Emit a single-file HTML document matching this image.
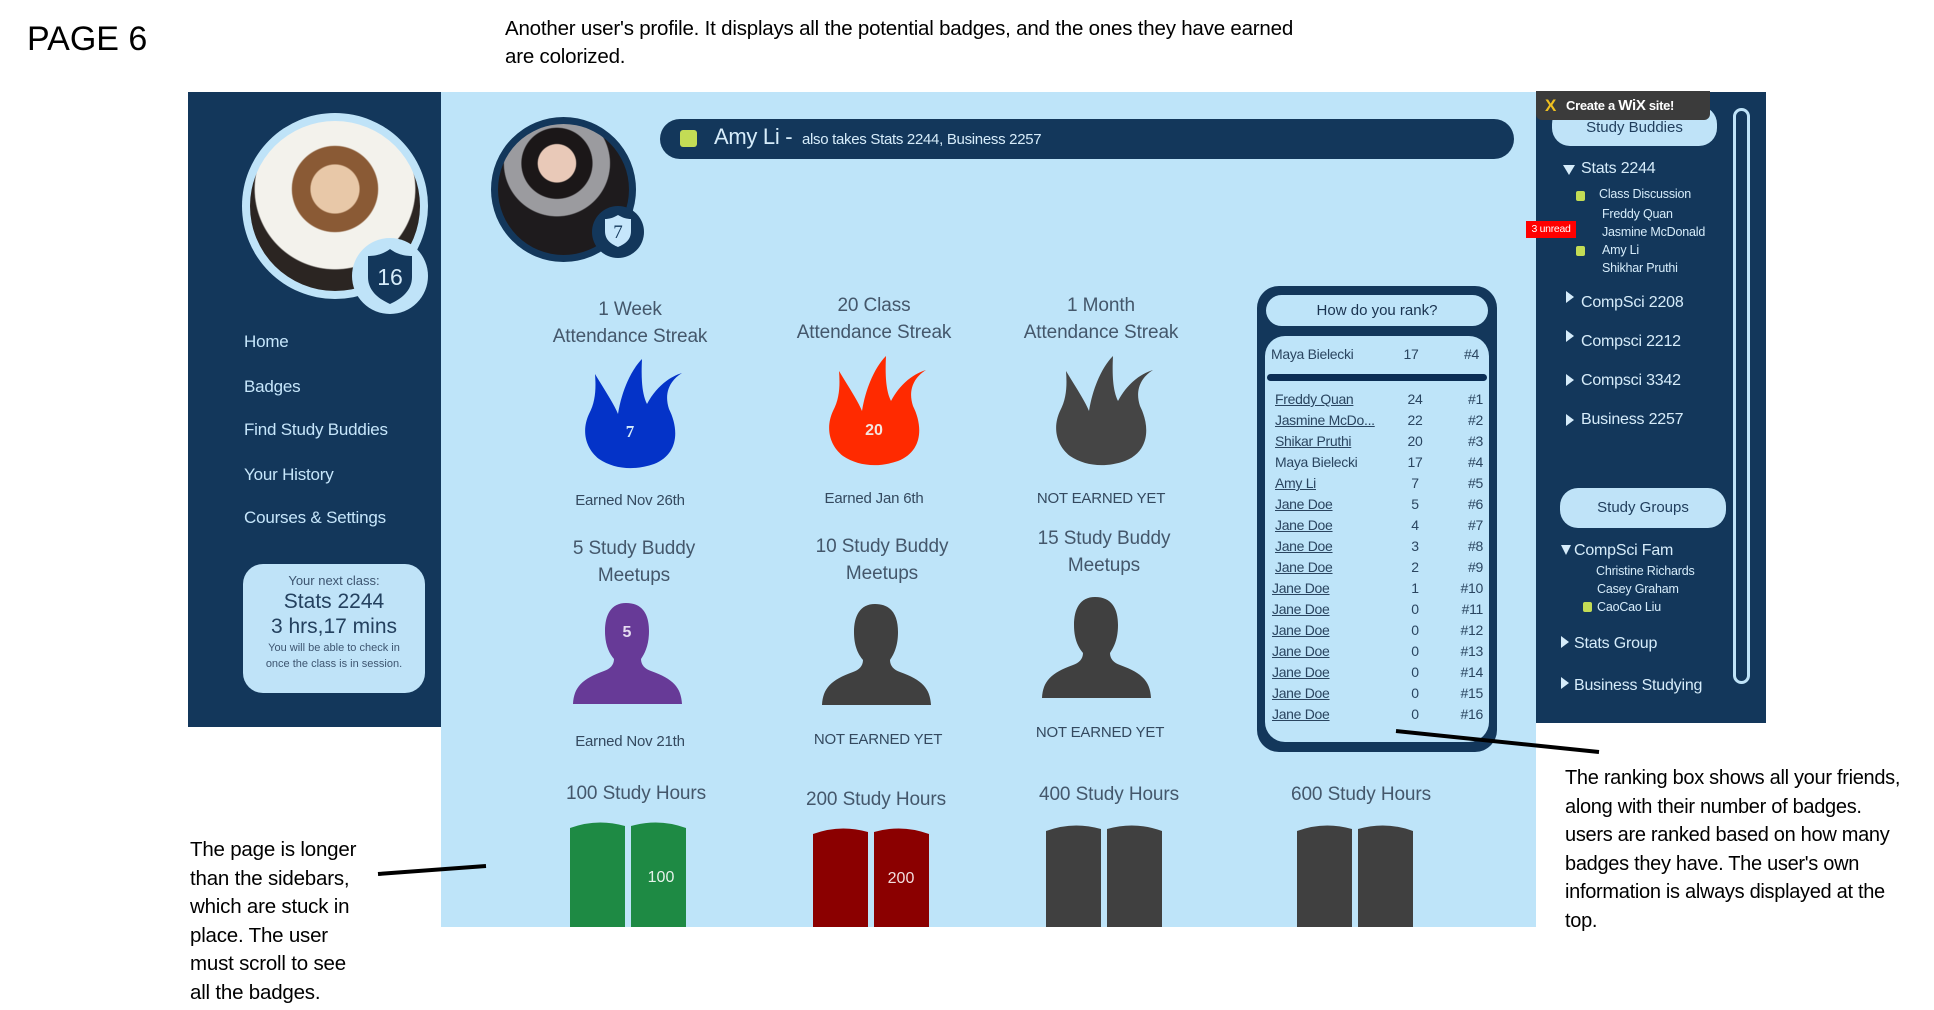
<!DOCTYPE html>
<html><head><meta charset="utf-8">
<style>
*{margin:0;padding:0;box-sizing:border-box}
body{width:1934px;height:1010px;background:#fff;position:relative;overflow:hidden;font-family:"Liberation Sans",sans-serif;color:#1a3a5c}
.a{position:absolute}
.cal{font-family:"Liberation Sans",sans-serif;color:#000}
.dk{background:#13375b}
.nav{color:#c6e6fb;font-size:17px;left:244px;letter-spacing:-.2px}
.t{position:absolute;text-align:center;color:#44576b;font-size:19px;line-height:27px;width:240px;letter-spacing:-.1px}
.e{position:absolute;text-align:center;color:#34495f;font-size:15px;width:240px;letter-spacing:-.2px}
.rk{position:absolute;font-size:14px;color:#2a4560;left:0;width:240px;height:21px;letter-spacing:-.3px}
.rk span{position:absolute}
.rk .n{left:10px;text-decoration:underline}
.rk .c{left:135px;width:30px;text-align:center}
.rk .r{right:22px}
.sb{color:#d6ecfa;position:absolute;font-size:16px;letter-spacing:-.2px}
.ss{color:#d6ecfa;position:absolute;font-size:12.5px;letter-spacing:-.2px}
.tri{position:absolute;width:0;height:0}
.gs{position:absolute;width:9px;height:10px;background:#c3dc55;border-radius:2px}
</style></head><body>

<div class="a cal" style="left:27px;top:20px;font-size:34px">PAGE 6</div>
<div class="a cal" style="left:505px;top:15px;font-size:20.5px;line-height:28px;letter-spacing:-.2px">Another user's profile. It displays all the potential badges, and the ones they have earned<br>are colorized.</div>

<!-- left sidebar -->
<div class="a dk" style="left:188px;top:92px;width:253px;height:635px"></div>
<div class="a" style="left:242px;top:113px;width:186px;height:186px;border-radius:50%;background:#bfe3f8"></div>
<div class="a" style="left:250px;top:121px;width:170px;height:170px;border-radius:50%;background:radial-gradient(circle at 50% 40%,#e8c8a8 0 18%,#8a5a35 19% 32%,#f3f2ec 33% 60%,#2b2522 61%)"></div>
<div class="a" style="left:352px;top:238px;width:76px;height:76px;border-radius:50%;background:#bfe3f8"></div>
<svg class="a" style="left:365px;top:247px" width="50" height="58" viewBox="0 0 50 58"><path d="M25 2 C33 8 41 9 47 9 L47 30 C47 44 36 52 25 57 C14 52 3 44 3 30 L3 9 C9 9 17 8 25 2Z" fill="#13375b"/><text x="25" y="38" text-anchor="middle" fill="#d6ecfa" font-size="23" font-family="Liberation Sans,sans-serif">16</text></svg>
<div class="a nav" style="top:332px">Home</div>
<div class="a nav" style="top:377px">Badges</div>
<div class="a nav" style="top:420px">Find Study Buddies</div>
<div class="a nav" style="top:465px">Your History</div>
<div class="a nav" style="top:508px">Courses &amp; Settings</div>
<div class="a" style="left:243px;top:564px;width:182px;height:129px;border-radius:20px;background:#bfe3f8;text-align:center;color:#24415f">
<div style="font-size:13px;margin-top:9px;color:#3d5570">Your next class:</div>
<div style="font-size:21px;margin-top:2px">Stats 2244</div>
<div style="font-size:21px;margin-top:1px">3 hrs,17 mins</div>
<div style="font-size:11px;line-height:16px;margin-top:1px;color:#3d5570">You will be able to check in<br>once the class is in session.</div>
</div>

<!-- main -->
<div class="a" style="left:441px;top:92px;width:1095px;height:835px;background:#bee4f9"></div>
<div class="a" style="left:491px;top:117px;width:145px;height:145px;border-radius:50%;background:#13375b"></div>
<div class="a" style="left:498px;top:124px;width:131px;height:131px;border-radius:50%;background:radial-gradient(circle at 45% 30%,#e9c9b8 0 16%,#1b1718 17% 30%,#9b9b9f 31% 45%,#1e1b1d 46%)"></div>
<div class="a" style="left:592px;top:206px;width:52px;height:52px;border-radius:50%;background:#13375b"></div>
<svg class="a" style="left:604px;top:214px" width="28" height="34" viewBox="0 0 28 34"><path d="M14 1 C19 4 23 5 27 5 L27 17 C27 26 21 30 14 33 C7 30 1 26 1 17 L1 5 C5 5 9 4 14 1Z" fill="#c6e6fb"/><text x="14" y="24" text-anchor="middle" fill="#13375b" font-size="19" font-family="Liberation Serif,serif">7</text></svg>
<div class="a dk" style="left:660px;top:119px;width:854px;height:40px;border-radius:20px"></div>
<div class="a" style="left:680px;top:130px;width:17px;height:17px;background:#c3dc55;border-radius:3px"></div>
<div class="a" style="left:714px;top:124px;color:#d6ecfa;font-size:22px;letter-spacing:-.3px">Amy Li - <span style="font-size:15px">&nbsp;also takes Stats 2244, Business 2257</span></div>

<!-- row 1 -->
<div class="t" style="left:510px;top:296px">1 Week<br>Attendance Streak</div>
<div class="t" style="left:754px;top:292px">20 Class<br>Attendance Streak</div>
<div class="t" style="left:981px;top:292px">1 Month<br>Attendance Streak</div>
<svg class="a" style="left:582px;top:358px" width="104" height="112" viewBox="-2 -1 104 112"><path d="M11 15 C20 30 30 45 34 55 C38 30 48 10 58 0 C57 20 58 35 63 45 C72 28 85 18 98 14 C85 22 80 35 85 50 C95 70 95 95 70 105 C50 112 30 110 15 100 C0 88 -2 70 5 55 C12 42 12 28 11 15Z" fill="#0433c8"/><text x="46" y="78" text-anchor="middle" fill="#d6ecfa" font-size="17" font-weight="bold" font-family="Liberation Serif,serif">7</text></svg>
<svg class="a" style="left:826px;top:355px" width="104" height="112" viewBox="-2 -1 104 112"><path d="M11 15 C20 30 30 45 34 55 C38 30 48 10 58 0 C57 20 58 35 63 45 C72 28 85 18 98 14 C85 22 80 35 85 50 C95 70 95 95 70 105 C50 112 30 110 15 100 C0 88 -2 70 5 55 C12 42 12 28 11 15Z" fill="#ff2a00"/><text x="46" y="79" text-anchor="middle" fill="#f4e6e0" font-size="16" font-weight="bold" font-family="Liberation Sans,sans-serif">20</text></svg>
<svg class="a" style="left:1053px;top:355px" width="104" height="112" viewBox="-2 -1 104 112"><path d="M11 15 C20 30 30 45 34 55 C38 30 48 10 58 0 C57 20 58 35 63 45 C72 28 85 18 98 14 C85 22 80 35 85 50 C95 70 95 95 70 105 C50 112 30 110 15 100 C0 88 -2 70 5 55 C12 42 12 28 11 15Z" fill="#454545"/></svg>
<div class="e" style="left:510px;top:492px">Earned Nov 26th</div>
<div class="e" style="left:754px;top:490px">Earned Jan 6th</div>
<div class="e" style="left:981px;top:490px">NOT EARNED YET</div>

<!-- row 2 -->
<div class="t" style="left:514px;top:535px">5 Study Buddy<br>Meetups</div>
<div class="t" style="left:762px;top:533px">10 Study Buddy<br>Meetups</div>
<div class="t" style="left:984px;top:525px">15 Study Buddy<br>Meetups</div>
<svg class="a" style="left:573px;top:603px" width="110" height="102" viewBox="0 0 110 102"><path d="M53 0 C70 0 76 12 76 28 C76 42 72 50 68 56 C68 62 72 66 78 68 C100 76 108 84 109 101 L0 101 C1 84 9 76 31 68 C37 66 41 62 41 56 C36 50 32 42 32 28 C32 12 38 0 53 0Z" fill="#673a97"/><text x="54" y="34" text-anchor="middle" fill="#e6dcf0" font-size="16" font-weight="bold" font-family="Liberation Sans,sans-serif">5</text></svg>
<svg class="a" style="left:822px;top:604px" width="110" height="102" viewBox="0 0 110 102"><path d="M53 0 C70 0 76 12 76 28 C76 42 72 50 68 56 C68 62 72 66 78 68 C100 76 108 84 109 101 L0 101 C1 84 9 76 31 68 C37 66 41 62 41 56 C36 50 32 42 32 28 C32 12 38 0 53 0Z" fill="#404040"/></svg>
<div class="a" style="left:1042px;top:597px"><svg width="110" height="102" viewBox="0 0 110 102"><path d="M53 0 C70 0 76 12 76 28 C76 42 72 50 68 56 C68 62 72 66 78 68 C100 76 108 84 109 101 L0 101 C1 84 9 76 31 68 C37 66 41 62 41 56 C36 50 32 42 32 28 C32 12 38 0 53 0Z" fill="#404040"/></svg></div>
<div class="e" style="left:510px;top:733px">Earned Nov 21th</div>
<div class="e" style="left:758px;top:731px">NOT EARNED YET</div>
<div class="e" style="left:980px;top:724px">NOT EARNED YET</div>

<!-- row 3 -->
<div class="t" style="left:516px;top:780px">100 Study Hours</div>
<div class="t" style="left:756px;top:786px">200 Study Hours</div>
<div class="t" style="left:989px;top:781px">400 Study Hours</div>
<div class="t" style="left:1241px;top:781px">600 Study Hours</div>
<svg class="a" style="left:570px;top:820px" width="116" height="107" viewBox="0 0 116 107"><path d="M0 8 Q27 -2 55 6 L55 107 L0 107Z M61 6 Q89 -2 116 8 L116 107 L61 107Z" fill="#1e8a44"/><text x="91" y="62" text-anchor="middle" fill="#e6f3ea" font-size="16" font-family="Liberation Sans,sans-serif">100</text></svg>
<svg class="a" style="left:813px;top:826px" width="116" height="101" viewBox="0 0 116 101"><path d="M0 8 Q27 -2 55 6 L55 101 L0 101Z M61 6 Q89 -2 116 8 L116 101 L61 101Z" fill="#8b0000"/><text x="88" y="57" text-anchor="middle" fill="#f2dede" font-size="16" font-family="Liberation Sans,sans-serif">200</text></svg>
<svg class="a" style="left:1046px;top:823px" width="116" height="104" viewBox="0 0 116 104"><path d="M0 8 Q27 -2 55 6 L55 104 L0 104Z M61 6 Q89 -2 116 8 L116 104 L61 104Z" fill="#404040"/></svg>
<svg class="a" style="left:1297px;top:823px" width="116" height="104" viewBox="0 0 116 104"><path d="M0 8 Q27 -2 55 6 L55 104 L0 104Z M61 6 Q89 -2 116 8 L116 104 L61 104Z" fill="#404040"/></svg>

<!-- rank box -->
<div class="a dk" style="left:1257px;top:286px;width:240px;height:466px;border-radius:22px"></div>
<div class="a" style="left:1266px;top:295px;width:222px;height:31px;border-radius:16px;background:#bee4f9;text-align:center;font-size:15px;line-height:31px;color:#1a3350">How do you rank?</div>
<div class="a" style="left:1265px;top:336px;width:224px;height:406px;border-radius:20px;background:#bee4f9;overflow:hidden">
<div class="rk" style="top:10px;left:-4px"><span class="n" style="text-decoration:none">Maya Bielecki</span><span class="c">17</span><span class="r">#4</span></div>
<div class="a" style="left:2px;top:38px;width:220px;height:7px;border-radius:4px;background:#0b2d55"></div>
</div>
<div class="a" style="left:1265px;top:336px;width:224px;height:406px">
<div class="rk" style="top:55px"><span class="n">Freddy Quan</span><span class="c">24</span><span class="r">#1</span></div>
<div class="rk" style="top:76px"><span class="n">Jasmine McDo...</span><span class="c">22</span><span class="r">#2</span></div>
<div class="rk" style="top:97px"><span class="n">Shikar Pruthi</span><span class="c">20</span><span class="r">#3</span></div>
<div class="rk" style="top:118px"><span class="n" style="text-decoration:none">Maya Bielecki</span><span class="c">17</span><span class="r">#4</span></div>
<div class="rk" style="top:139px"><span class="n">Amy Li</span><span class="c">7</span><span class="r">#5</span></div>
<div class="rk" style="top:160px"><span class="n">Jane Doe</span><span class="c">5</span><span class="r">#6</span></div>
<div class="rk" style="top:181px"><span class="n">Jane Doe</span><span class="c">4</span><span class="r">#7</span></div>
<div class="rk" style="top:202px"><span class="n">Jane Doe</span><span class="c">3</span><span class="r">#8</span></div>
<div class="rk" style="top:223px"><span class="n">Jane Doe</span><span class="c">2</span><span class="r">#9</span></div>
<div class="rk" style="top:244px"><span class="n" style="left:7px">Jane Doe</span><span class="c">1</span><span class="r">#10</span></div>
<div class="rk" style="top:265px"><span class="n" style="left:7px">Jane Doe</span><span class="c">0</span><span class="r">#11</span></div>
<div class="rk" style="top:286px"><span class="n" style="left:7px">Jane Doe</span><span class="c">0</span><span class="r">#12</span></div>
<div class="rk" style="top:307px"><span class="n" style="left:7px">Jane Doe</span><span class="c">0</span><span class="r">#13</span></div>
<div class="rk" style="top:328px"><span class="n" style="left:7px">Jane Doe</span><span class="c">0</span><span class="r">#14</span></div>
<div class="rk" style="top:349px"><span class="n" style="left:7px">Jane Doe</span><span class="c">0</span><span class="r">#15</span></div>
<div class="rk" style="top:370px"><span class="n" style="left:7px">Jane Doe</span><span class="c">0</span><span class="r">#16</span></div>
</div>

<!-- right sidebar -->
<div class="a dk" style="left:1536px;top:92px;width:230px;height:631px"></div>
<div class="a" style="left:1552px;top:106px;width:165px;height:40px;border-radius:18px;background:#bfe3f8;text-align:center;color:#1f3d5c;font-size:15px;line-height:44px">Study Buddies</div>
<div class="a" style="left:1536px;top:91px;width:174px;height:29px;background:#3b3b3b;border-radius:0 0 6px 6px;color:#fff;font-family:'Liberation Sans',sans-serif;font-weight:bold;font-size:13px;line-height:29px;padding-left:30px;letter-spacing:-.3px">Create a <span style="font-size:15px">WiX</span> site!</div>
<div class="a" style="left:1545px;top:96px;color:#f0c020;font-weight:bold;font-size:17px">X</div>
<div class="a" style="left:1733px;top:108px;width:17px;height:576px;border:3px solid #bfe3f8;border-radius:9px"></div>
<div class="tri" style="left:1563px;top:165px;border-left:6px solid transparent;border-right:6px solid transparent;border-top:10px solid #d6ecfa"></div>
<div class="sb" style="left:1581px;top:160px">Stats 2244</div>
<div class="gs" style="left:1576px;top:191px"></div>
<div class="ss" style="left:1599px;top:187px">Class Discussion</div>
<div class="ss" style="left:1602px;top:207px">Freddy Quan</div>
<div class="ss" style="left:1602px;top:225px">Jasmine McDonald</div>
<div class="gs" style="left:1576px;top:246px"></div>
<div class="ss" style="left:1602px;top:243px">Amy Li</div>
<div class="ss" style="left:1602px;top:261px">Shikhar Pruthi</div>
<div class="a" style="left:1526px;top:221px;width:50px;height:17px;background:#f00;color:#fff;font-size:10.5px;line-height:17px;text-align:center;letter-spacing:-.3px">3 unread</div>
<div class="tri" style="left:1566px;top:291px;border-top:6px solid transparent;border-bottom:6px solid transparent;border-left:8px solid #d6ecfa"></div>
<div class="sb" style="left:1581px;top:294px">CompSci 2208</div>
<div class="tri" style="left:1566px;top:330px;border-top:6px solid transparent;border-bottom:6px solid transparent;border-left:8px solid #d6ecfa"></div>
<div class="sb" style="left:1581px;top:333px">Compsci 2212</div>
<div class="tri" style="left:1566px;top:374px;border-top:6px solid transparent;border-bottom:6px solid transparent;border-left:8px solid #d6ecfa"></div>
<div class="sb" style="left:1581px;top:372px">Compsci 3342</div>
<div class="tri" style="left:1566px;top:414px;border-top:6px solid transparent;border-bottom:6px solid transparent;border-left:8px solid #d6ecfa"></div>
<div class="sb" style="left:1581px;top:411px">Business 2257</div>
<div class="a" style="left:1560px;top:488px;width:166px;height:40px;border-radius:18px;background:#bfe3f8;text-align:center;color:#1f3d5c;font-size:15px;line-height:40px">Study Groups</div>
<div class="tri" style="left:1561px;top:545px;border-left:5px solid transparent;border-right:5px solid transparent;border-top:10px solid #d6ecfa"></div>
<div class="sb" style="left:1574px;top:542px">CompSci Fam</div>
<div class="ss" style="left:1596px;top:564px">Christine Richards</div>
<div class="ss" style="left:1597px;top:582px">Casey Graham</div>
<div class="gs" style="left:1583px;top:602px"></div>
<div class="ss" style="left:1597px;top:600px">CaoCao Liu</div>
<div class="tri" style="left:1561px;top:636px;border-top:6px solid transparent;border-bottom:6px solid transparent;border-left:8px solid #d6ecfa"></div>
<div class="sb" style="left:1574px;top:635px">Stats Group</div>
<div class="tri" style="left:1561px;top:677px;border-top:6px solid transparent;border-bottom:6px solid transparent;border-left:8px solid #d6ecfa"></div>
<div class="sb" style="left:1574px;top:677px">Business Studying</div>

<!-- annotations -->
<div class="a cal" style="left:190px;top:836px;font-size:20.5px;line-height:28.5px;letter-spacing:-.2px">The page is longer<br>than the sidebars,<br>which are stuck in<br>place. The user<br>must scroll to see<br>all the badges.</div>
<div class="a cal" style="left:1565px;top:764px;font-size:20px;line-height:28.5px;letter-spacing:-.3px">The ranking box shows all your friends,<br>along with their number of badges.<br>users are ranked based on how many<br>badges they have. The user's own<br>information is always displayed at the<br>top.</div>
<svg class="a" style="left:0;top:0" width="1934" height="1010"><line x1="378" y1="874" x2="486" y2="866" stroke="#000" stroke-width="4"/><line x1="1396" y1="731" x2="1599" y2="752" stroke="#000" stroke-width="4"/></svg>
</body></html>
